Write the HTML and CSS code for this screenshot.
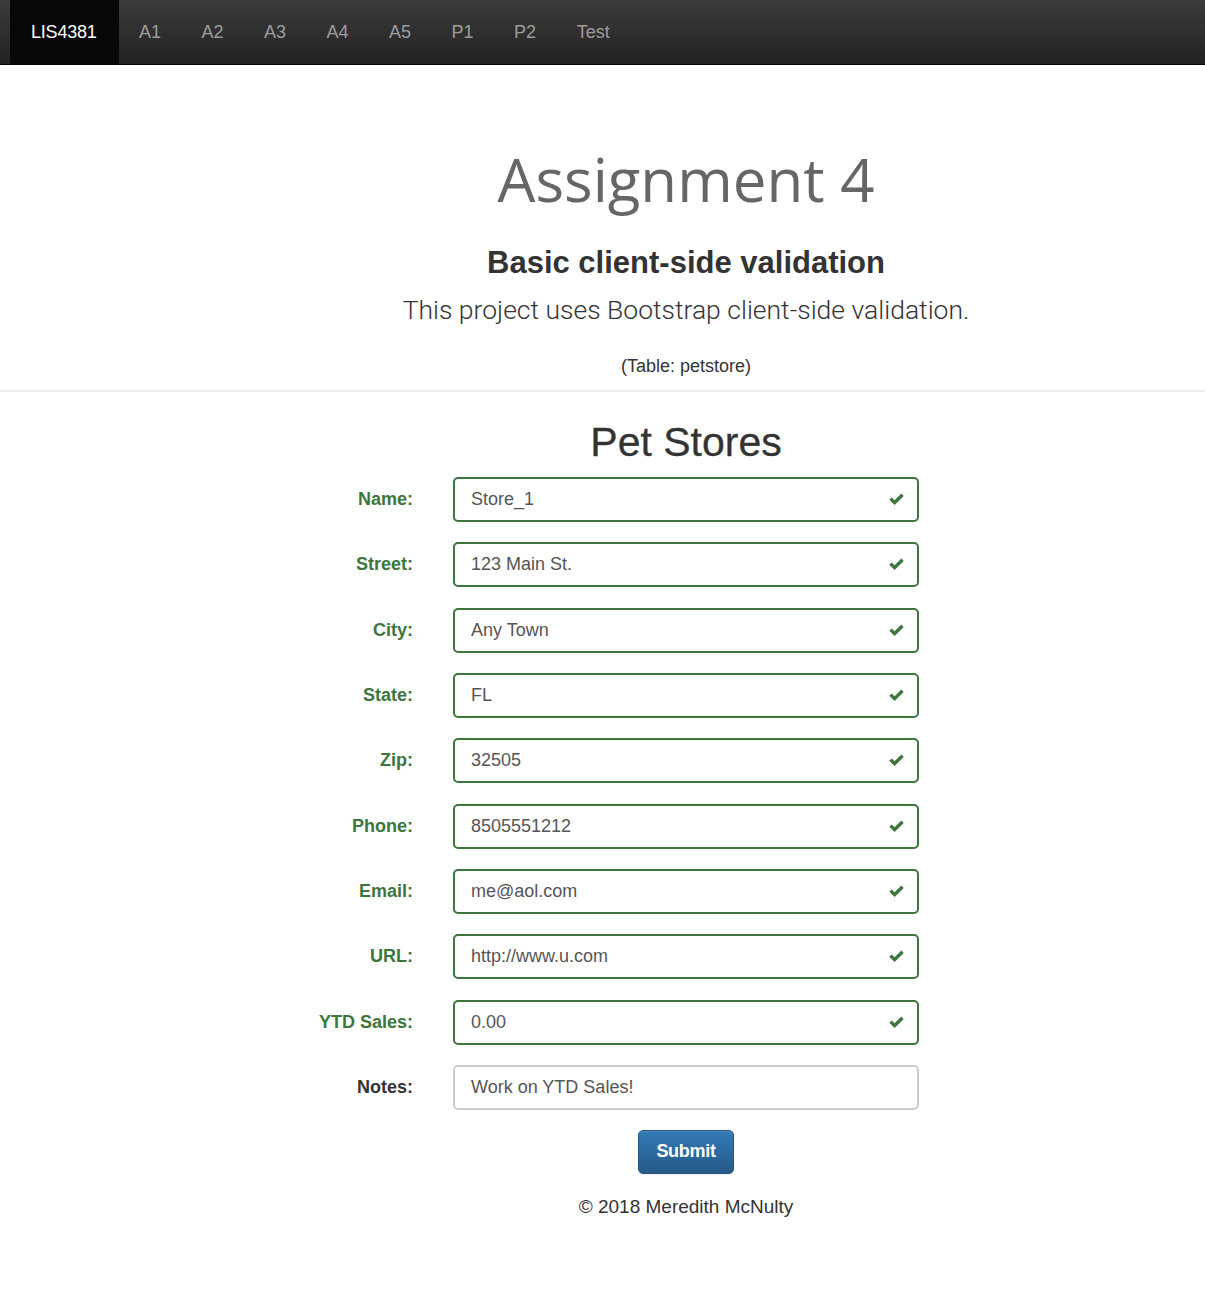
FILE: index.html
```html
<!DOCTYPE html>
<html lang="en">
<head>
<meta charset="utf-8">
<title>LIS4381 - Assignment 4</title>
<link rel="stylesheet" href="styles.css">
</head>
<body>
<nav class="navbar">
  <a class="brand" href="#">LIS4381</a>
  <ul class="nav">
    <li><a href="#">A1</a></li>
    <li><a href="#">A2</a></li>
    <li><a href="#">A3</a></li>
    <li><a href="#">A4</a></li>
    <li><a href="#">A5</a></li>
    <li><a href="#">P1</a></li>
    <li><a href="#">P2</a></li>
    <li><a href="#">Test</a></li>
  </ul>
</nav>

<header class="content header">
  <h1 class="title">Assignment 4</h1>
  <h2 class="subtitle">Basic client-side validation</h2>
  <p class="lead">This project uses Bootstrap client-side validation.</p>
  <p class="table-note">(Table: petstore)</p>
</header>
<hr class="divider">

<main class="content">
  <h2 class="form-title">Pet Stores</h2>
  <form class="form">
    <label class="lbl ok">Name:</label>
    <div class="field ok"><span class="val">Store_1</span><svg class="check" viewBox="0 0 16 12"><path d="M1.2 6.2 L3.4 4 L6.2 6.8 L12.6 0.4 L14.8 2.6 L6.2 11.2 Z"/></svg></div>

    <label class="lbl ok">Street:</label>
    <div class="field ok"><span class="val">123 Main St.</span><svg class="check" viewBox="0 0 16 12"><path d="M1.2 6.2 L3.4 4 L6.2 6.8 L12.6 0.4 L14.8 2.6 L6.2 11.2 Z"/></svg></div>

    <label class="lbl ok">City:</label>
    <div class="field ok"><span class="val">Any Town</span><svg class="check" viewBox="0 0 16 12"><path d="M1.2 6.2 L3.4 4 L6.2 6.8 L12.6 0.4 L14.8 2.6 L6.2 11.2 Z"/></svg></div>

    <label class="lbl ok">State:</label>
    <div class="field ok"><span class="val">FL</span><svg class="check" viewBox="0 0 16 12"><path d="M1.2 6.2 L3.4 4 L6.2 6.8 L12.6 0.4 L14.8 2.6 L6.2 11.2 Z"/></svg></div>

    <label class="lbl ok">Zip:</label>
    <div class="field ok"><span class="val">32505</span><svg class="check" viewBox="0 0 16 12"><path d="M1.2 6.2 L3.4 4 L6.2 6.8 L12.6 0.4 L14.8 2.6 L6.2 11.2 Z"/></svg></div>

    <label class="lbl ok">Phone:</label>
    <div class="field ok"><span class="val">8505551212</span><svg class="check" viewBox="0 0 16 12"><path d="M1.2 6.2 L3.4 4 L6.2 6.8 L12.6 0.4 L14.8 2.6 L6.2 11.2 Z"/></svg></div>

    <label class="lbl ok">Email:</label>
    <div class="field ok"><span class="val">me@aol.com</span><svg class="check" viewBox="0 0 16 12"><path d="M1.2 6.2 L3.4 4 L6.2 6.8 L12.6 0.4 L14.8 2.6 L6.2 11.2 Z"/></svg></div>

    <label class="lbl ok">URL:</label>
    <div class="field ok"><span class="val">http://www.u.com</span><svg class="check" viewBox="0 0 16 12"><path d="M1.2 6.2 L3.4 4 L6.2 6.8 L12.6 0.4 L14.8 2.6 L6.2 11.2 Z"/></svg></div>

    <label class="lbl ok">YTD Sales:</label>
    <div class="field ok"><span class="val">0.00</span><svg class="check" viewBox="0 0 16 12"><path d="M1.2 6.2 L3.4 4 L6.2 6.8 L12.6 0.4 L14.8 2.6 L6.2 11.2 Z"/></svg></div>

    <label class="lbl">Notes:</label>
    <div class="field"><span class="val">Work on YTD Sales!</span></div>
  </form>
  <div class="actions"><button class="btn" type="button">Submit</button></div>
  <footer class="footer">© 2018 Meredith McNulty</footer>
</main>
</body>
</html>
```

FILE: styles.css
```css
* { box-sizing: border-box; }
html, body { margin: 0; padding: 0; }
body {
  font-family: "Liberation Sans", Arial, sans-serif;
  font-size: 18px;
  color: #333;
  background: #fff;
}

.navbar {
  display: flex;
  height: 65px;
  padding-left: 10px;
  background: linear-gradient(to bottom, #3c3c3c 0%, #222 100%);
  border-bottom: 1px solid #080808;
}
.brand {
  display: flex;
  align-items: center;
  padding: 0 22px 0 21px;
  background: #080808;
  color: #fff;
  font-size: 18px;
  text-decoration: none;
  letter-spacing: -0.2px;
}
.nav {
  display: flex;
  list-style: none;
  margin: 0;
  padding: 0;
}
.nav a {
  display: flex;
  align-items: center;
  height: 64px;
  padding: 0 20.25px;
  color: #9d9d9d;
  font-size: 18px;
  text-decoration: none;
}

.content {
  width: 800px;
  margin-left: 286px;
  text-align: center;
}
.header { padding-top: 72px; }
.title {
  margin: 0;
  font-family: "Open Sans", "DejaVu Sans", sans-serif;
  font-weight: 400;
  font-size: 60px;
  line-height: 84px;
  color: #666;
  letter-spacing: 0;
}
.subtitle {
  margin: 23px 0 0;
  font-size: 31px;
  font-weight: 700;
  line-height: 38px;
  color: #333;
}
.lead {
  margin: 8px 0 0;
  font-family: "Roboto", "Liberation Sans", sans-serif;
  font-size: 26.5px;
  font-weight: 300;
  line-height: 40px;
  color: #333;
}
.table-note {
  margin: 24px 0 0;
  font-size: 18px;
  line-height: 24px;
  color: #333;
}
.divider {
  margin: 12px 0 0;
  border: 0;
  border-top: 2px solid #eee;
}

.form-title {
  margin: 25px 0 10px;
  font-size: 41px;
  font-weight: 500;
  line-height: 50px;
  color: #333;
  -webkit-text-stroke: 0.3px #333;
}
.form {
  display: grid;
  grid-template-columns: 127px 466px;
  column-gap: 40px;
  row-gap: 20.33px;
  align-items: center;
  text-align: left;
}
.lbl {
  text-align: right;
  font-weight: 700;
  font-size: 18px;
  color: #333;
}
.lbl.ok { color: #3c763d; }
.field {
  display: flex;
  align-items: center;
  justify-content: space-between;
  height: 45px;
  padding: 0 12px 0 16px;
  border: 2px solid #ccc;
  border-radius: 5px;
  color: #555;
  font-size: 18px;
}
.field.ok { border-color: #3c763d; }
.check {
  width: 17px;
  height: 13px;
  fill: #3c763d;
}

.actions { margin-top: 20px; }
.btn {
  width: 96px;
  height: 44px;
  font-family: "Liberation Sans", Arial, sans-serif;
  font-size: 18px;
  font-weight: 700;
  color: #fff;
  background: linear-gradient(to bottom, #337ab7 0%, #265a88 100%);
  border: 1px solid #245580;
  border-radius: 5px;
  box-shadow: inset 0 1px 0 rgba(255,255,255,.15), 0 1px 1px rgba(0,0,0,.075);
  letter-spacing: -0.3px;
}
.footer {
  margin-top: 22px;
  font-size: 19px;
  color: #333;
}
```
